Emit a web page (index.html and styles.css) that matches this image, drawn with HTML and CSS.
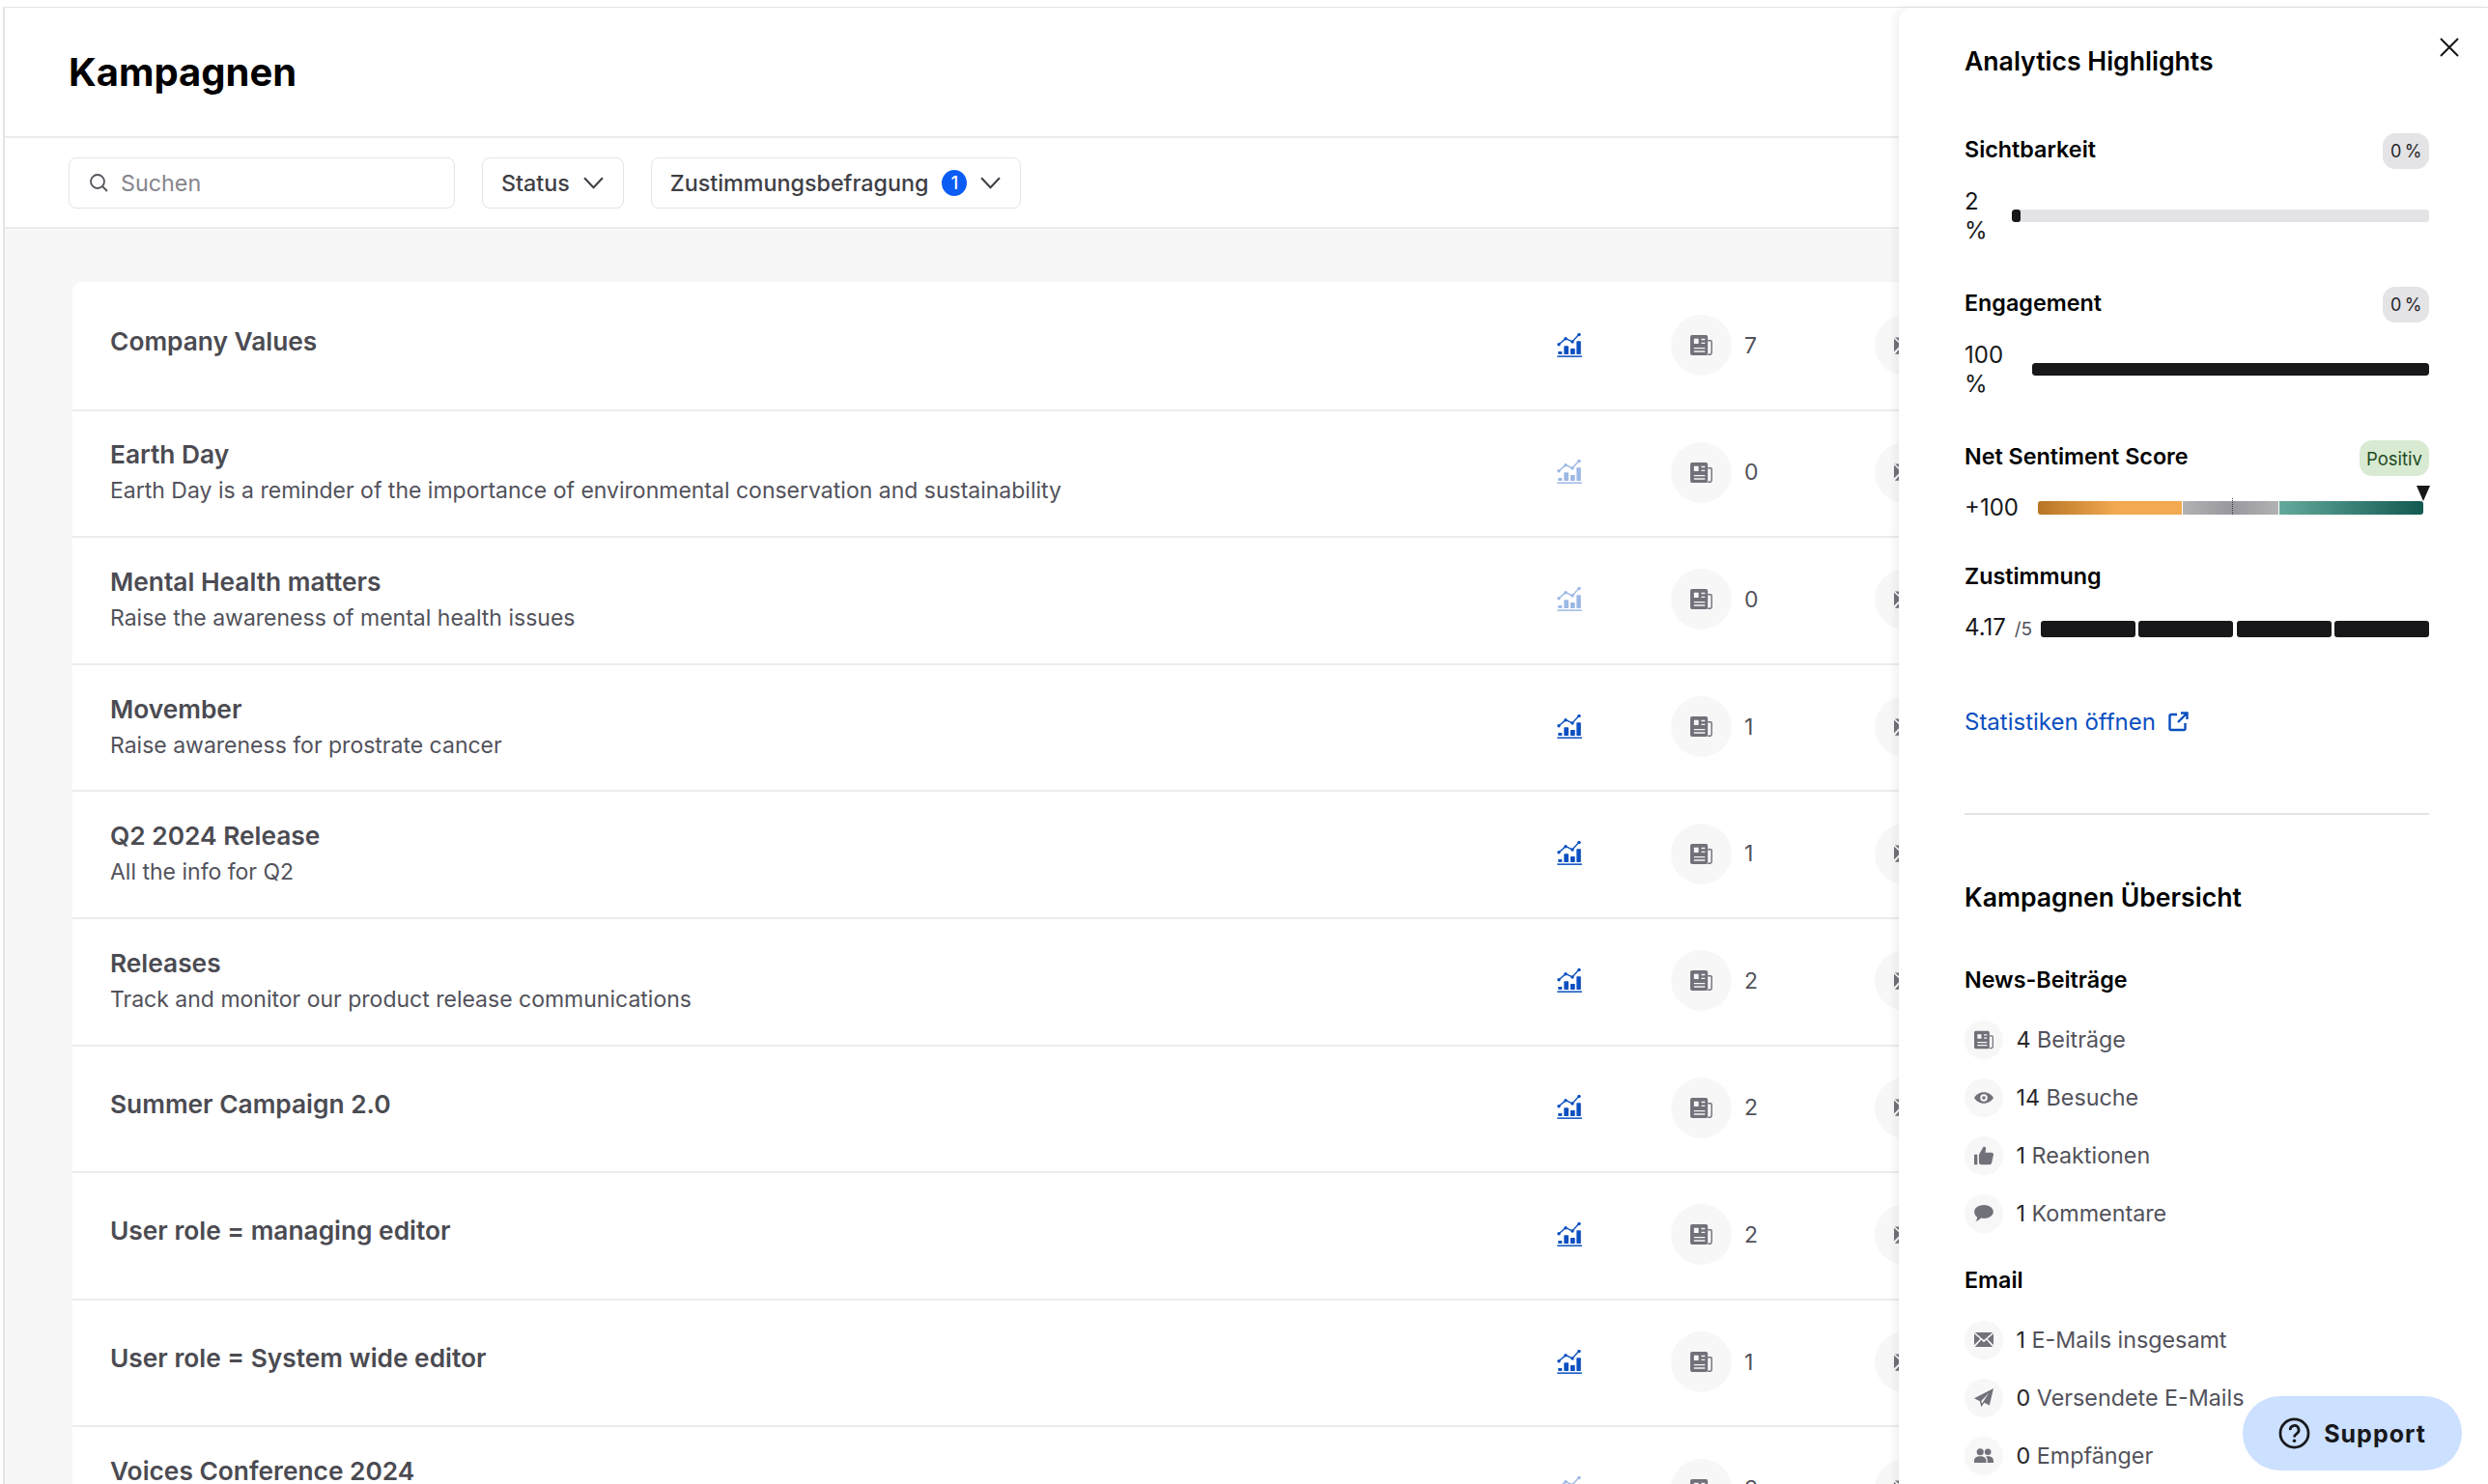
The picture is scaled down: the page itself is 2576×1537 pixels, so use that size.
FILE: index.html
```html
<!DOCTYPE html>
<html lang="de">

<head>
    <meta charset="UTF-8">
    <meta name="viewport" content="width=device-width, initial-scale=1.0">
    <title>Kampagnen</title>
    <link rel="stylesheet" href="styles.css">
</head>

<body>
    <svg class="sprites" aria-hidden="true">
        <symbol id="i-chart" viewBox="0 0 26 26">
            <path d="M2 11.7 9 5.7 16 9 23 1" fill="none" stroke="currentColor" stroke-width="1.4"/>
            <circle cx="2" cy="11.7" r="1.7" fill="currentColor"/>
            <circle cx="9" cy="5.7" r="1.7" fill="currentColor"/>
            <circle cx="16" cy="9" r="1.7" fill="currentColor"/>
            <circle cx="23" cy="1.6" r="1.7" fill="currentColor"/>
            <rect x="1.3" y="19" width="4" height="2.9" fill="currentColor"/>
            <rect x="7.3" y="13.3" width="4.7" height="8.6" rx=".6" fill="currentColor"/>
            <rect x="14" y="16" width="4.7" height="5.9" rx=".6" fill="currentColor"/>
            <rect x="20.3" y="8.3" width="4.5" height="13.6" rx=".6" fill="currentColor"/>
            <rect x=".3" y="23.4" width="25.6" height="1.5" fill="currentColor"/>
        </symbol>
        <symbol id="i-news" viewBox="0 0 24 22">
            <path fill-rule="evenodd" fill="currentColor" d="M2 0h15a2 2 0 0 1 2 2v18a2 2 0 0 1-2 2H2a2 2 0 0 1-2-2V2a2 2 0 0 1 2-2zM4 4v5.500h5V4zM12 4v1.500h4V4zM12 8v1.500h4V8zM4 13.500V15h12v-1.500zM4 17v1.500h12V17z"/>
            <path d="M19 6h3a1.200 1.200 0 0 1 1.200 1.200V19a2.300 2.300 0 0 1-2.300 2.300H19" fill="none" stroke="currentColor" stroke-width="1.500"/>
        </symbol>
        <symbol id="i-mail" viewBox="0 0 24 18">
            <path fill="currentColor" d="M1 0h22L12 9.500zM0 1.500l7.500 6.700L0 15.500zM24 1.500l-7.500 6.700 7.500 7.300zM8.700 9.300 12 12.200l3.300-2.900L23 18H1z"/>
        </symbol>
        <symbol id="i-eye" viewBox="0 0 24 14">
            <path fill="currentColor" fill-rule="evenodd" d="M12 0c5.500 0 9.800 3.200 12 7-2.200 3.800-6.500 7-12 7S2.200 10.800 0 7c2.200-3.800 6.500-7 12-7zm0 2.500a4.500 4.500 0 1 0 0 9 4.500 4.500 0 0 0 0-9zm0 2.300a2.200 2.200 0 1 1 0 4.400 2.200 2.200 0 0 1 0-4.400z"/>
        </symbol>
        <symbol id="i-thumb" viewBox="0 0 24 24">
            <path fill="currentColor" d="M0 10.500h4V23H0zM6 10.500 11.500.8c2.100-.4 3.300 1 3 3L13.700 8H21.500a2.500 2.500 0 0 1 2.400 3l-2.100 9.700A3 3 0 0 1 18.900 23H9a3 3 0 0 1-3-3z"/>
        </symbol>
        <symbol id="i-comment" viewBox="0 0 24 22">
            <path fill="currentColor" d="M12 0c6.600 0 12 3.700 12 8.500S18.600 17 12 17c-1.300 0-2.500-.1-3.700-.4C6.500 18.600 4 20.500 1.500 21c1.200-1.500 2-3.300 2.100-5.500C1.400 14 0 11.400 0 8.500 0 3.700 5.400 0 12 0z"/>
        </symbol>
        <symbol id="i-send" viewBox="0 0 24 24">
            <path fill="currentColor" d="M24 0 19 21l-6.500-3.300-3.700 5.300-1.800-7L0 12.300zM8.800 15.600l.9 3.400 1.300-2.200 7.500-11.500z"/>
        </symbol>
        <symbol id="i-people" viewBox="0 0 24 18">
            <circle cx="7.500" cy="4.500" r="4.300" fill="currentColor"/>
            <circle cx="17" cy="4.500" r="4" fill="currentColor"/>
            <path fill="currentColor" d="M0 18v-2.500C0 12 3 10 7.500 10S15 12 15 15.500V18zM16.500 18v-3c0-1.800-.7-3.500-2-4.600 .8-.3 1.700-.4 2.700-.4 4 0 6.800 2 6.800 5.500V18z"/>
        </symbol>
    </svg>

    <div class="app">
        <header class="page-header">
            <h1>Kampagnen</h1>
        </header>

        <div class="toolbar">
            <div class="search">
                <svg class="search-icon" viewBox="0 0 20 20"><circle cx="9" cy="9" r="7" fill="none" stroke="currentColor" stroke-width="1.800"/><path d="m14 14 5 5" stroke="currentColor" stroke-width="1.800"/></svg>
                <span>Suchen</span>
            </div>
            <div class="filter">
                <span>Status</span>
                <svg class="chevron" viewBox="0 0 20 12"><path d="m1 1 9 9.500L19 1" fill="none" stroke="currentColor" stroke-width="2"/></svg>
            </div>
            <div class="filter">
                <span>Zustimmungsbefragung</span>
                <span class="count">1</span>
                <svg class="chevron" viewBox="0 0 20 12"><path d="m1 1 9 9.500L19 1" fill="none" stroke="currentColor" stroke-width="2"/></svg>
            </div>
        </div>

        <main class="content">
            <div class="campaigns">
                <div class="campaign">
                    <div class="campaign-text"><div class="campaign-title">Company Values</div></div>
                    <svg class="chart"><use href="#i-chart"/></svg>
                    <div class="stat"><span class="stat-icon"><svg class="news"><use href="#i-news"/></svg></span>7</div>
                    <div class="stat"><span class="stat-icon"><svg class="mail"><use href="#i-mail"/></svg></span></div>
                </div>
                <div class="campaign">
                    <div class="campaign-text">
                        <div class="campaign-title">Earth Day</div>
                        <div class="campaign-sub">Earth Day is a reminder of the importance of environmental conservation and sustainability</div>
                    </div>
                    <svg class="chart faded"><use href="#i-chart"/></svg>
                    <div class="stat"><span class="stat-icon"><svg class="news"><use href="#i-news"/></svg></span>0</div>
                    <div class="stat"><span class="stat-icon"><svg class="mail"><use href="#i-mail"/></svg></span></div>
                </div>
                <div class="campaign">
                    <div class="campaign-text">
                        <div class="campaign-title">Mental Health matters</div>
                        <div class="campaign-sub">Raise the awareness of mental health issues</div>
                    </div>
                    <svg class="chart faded"><use href="#i-chart"/></svg>
                    <div class="stat"><span class="stat-icon"><svg class="news"><use href="#i-news"/></svg></span>0</div>
                    <div class="stat"><span class="stat-icon"><svg class="mail"><use href="#i-mail"/></svg></span></div>
                </div>
                <div class="campaign">
                    <div class="campaign-text">
                        <div class="campaign-title">Movember</div>
                        <div class="campaign-sub">Raise awareness for prostrate cancer</div>
                    </div>
                    <svg class="chart"><use href="#i-chart"/></svg>
                    <div class="stat"><span class="stat-icon"><svg class="news"><use href="#i-news"/></svg></span>1</div>
                    <div class="stat"><span class="stat-icon"><svg class="mail"><use href="#i-mail"/></svg></span></div>
                </div>
                <div class="campaign">
                    <div class="campaign-text">
                        <div class="campaign-title">Q2 2024 Release</div>
                        <div class="campaign-sub">All the info for Q2</div>
                    </div>
                    <svg class="chart"><use href="#i-chart"/></svg>
                    <div class="stat"><span class="stat-icon"><svg class="news"><use href="#i-news"/></svg></span>1</div>
                    <div class="stat"><span class="stat-icon"><svg class="mail"><use href="#i-mail"/></svg></span></div>
                </div>
                <div class="campaign">
                    <div class="campaign-text">
                        <div class="campaign-title">Releases</div>
                        <div class="campaign-sub">Track and monitor our product release communications</div>
                    </div>
                    <svg class="chart"><use href="#i-chart"/></svg>
                    <div class="stat"><span class="stat-icon"><svg class="news"><use href="#i-news"/></svg></span>2</div>
                    <div class="stat"><span class="stat-icon"><svg class="mail"><use href="#i-mail"/></svg></span></div>
                </div>
                <div class="campaign">
                    <div class="campaign-text"><div class="campaign-title">Summer Campaign 2.0</div></div>
                    <svg class="chart"><use href="#i-chart"/></svg>
                    <div class="stat"><span class="stat-icon"><svg class="news"><use href="#i-news"/></svg></span>2</div>
                    <div class="stat"><span class="stat-icon"><svg class="mail"><use href="#i-mail"/></svg></span></div>
                </div>
                <div class="campaign">
                    <div class="campaign-text"><div class="campaign-title">User role = managing editor</div></div>
                    <svg class="chart"><use href="#i-chart"/></svg>
                    <div class="stat"><span class="stat-icon"><svg class="news"><use href="#i-news"/></svg></span>2</div>
                    <div class="stat"><span class="stat-icon"><svg class="mail"><use href="#i-mail"/></svg></span></div>
                </div>
                <div class="campaign">
                    <div class="campaign-text"><div class="campaign-title">User role = System wide editor</div></div>
                    <svg class="chart"><use href="#i-chart"/></svg>
                    <div class="stat"><span class="stat-icon"><svg class="news"><use href="#i-news"/></svg></span>1</div>
                    <div class="stat"><span class="stat-icon"><svg class="mail"><use href="#i-mail"/></svg></span></div>
                </div>
                <div class="campaign">
                    <div class="campaign-text">
                        <div class="campaign-title">Voices Conference 2024</div>
                        <div class="campaign-sub">&nbsp;</div>
                    </div>
                    <svg class="chart faded"><use href="#i-chart"/></svg>
                    <div class="stat"><span class="stat-icon"><svg class="news"><use href="#i-news"/></svg></span>3</div>
                    <div class="stat"><span class="stat-icon"><svg class="mail"><use href="#i-mail"/></svg></span></div>
                </div>
            </div>
        </main>
    </div>

    <aside class="drawer">
        <svg class="close" viewBox="0 0 20 20"><path d="m1 1 18 18M19 1 1 19" fill="none" stroke="currentColor" stroke-width="2"/></svg>
        <h2 class="drawer-title">Analytics Highlights</h2>

        <section class="metric metric-first">
            <div class="metric-head"><h3>Sichtbarkeit</h3><span class="pill">0 %</span></div>
            <div class="metric-row metric-row-tight">
                <div class="value">2 %</div>
                <div class="bar"><div class="bar-fill" style="width: 2%"></div></div>
            </div>
        </section>

        <section class="metric">
            <div class="metric-head"><h3>Engagement</h3><span class="pill">0 %</span></div>
            <div class="metric-row">
                <div class="value">100 %</div>
                <div class="bar"><div class="bar-fill" style="width: 100%"></div></div>
            </div>
        </section>

        <section class="metric">
            <div class="metric-head"><h3>Net Sentiment Score</h3><span class="pill pill-green">Positiv</span></div>
            <div class="sentiment-row">
                <div class="sentiment-value">+100</div>
                <div class="sentiment">
                    <div class="seg seg-neg"></div>
                    <div class="seg seg-neutral"></div>
                    <div class="seg seg-pos"></div>
                    <div class="sentiment-zero"></div>
                    <div class="sentiment-pointer"></div>
                </div>
            </div>
        </section>

        <section class="metric metric-approval">
            <div class="metric-head"><h3>Zustimmung</h3></div>
            <div class="approval-row">
                <div class="approval-value">4.17 <small>/5</small></div>
                <div class="approval">
                    <div class="approval-seg"></div>
                    <div class="approval-seg"></div>
                    <div class="approval-seg"></div>
                    <div class="approval-seg"></div>
                </div>
            </div>
        </section>

        <a class="stats-link">Statistiken öffnen
            <svg viewBox="0 0 21 21"><path d="M9 3H3a1.500 1.500 0 0 0-1.500 1.500v13A1.500 1.500 0 0 0 3 19h13a1.500 1.500 0 0 0 1.500-1.500V12M13 1.500h6.500V8M19 2l-9 9" fill="none" stroke="currentColor" stroke-width="2.400"/></svg>
        </a>

        <hr class="drawer-rule">

        <h2 class="overview-title">Kampagnen Übersicht</h2>

        <h3 class="group-title">News-Beiträge</h3>
        <ul class="overview">
            <li><span class="ov-icon"><svg class="ov-news"><use href="#i-news"/></svg></span><b>4</b> Beiträge</li>
            <li><span class="ov-icon"><svg class="ov-eye"><use href="#i-eye"/></svg></span><b>14</b> Besuche</li>
            <li><span class="ov-icon"><svg class="ov-thumb"><use href="#i-thumb"/></svg></span><b>1</b> Reaktionen</li>
            <li><span class="ov-icon"><svg class="ov-comment"><use href="#i-comment"/></svg></span><b>1</b> Kommentare</li>
        </ul>

        <h3 class="group-title group-email">Email</h3>
        <ul class="overview">
            <li><span class="ov-icon"><svg class="ov-mail"><use href="#i-mail"/></svg></span><b>1</b> E-Mails insgesamt</li>
            <li><span class="ov-icon"><svg class="ov-send"><use href="#i-send"/></svg></span><b>0</b> Versendete E-Mails</li>
            <li><span class="ov-icon"><svg class="ov-people"><use href="#i-people"/></svg></span><b>0</b> Empfänger</li>
        </ul>
    </aside>

    <button class="support">
        <svg viewBox="0 0 34 34"><circle cx="17" cy="17" r="15" fill="none" stroke="currentColor" stroke-width="2.800"/><path d="M12.500 13.500a4.600 4.600 0 1 1 7 3.800c-1.700 1.100-2.500 1.900-2.500 3.700" fill="none" stroke="currentColor" stroke-width="2.800"/><circle cx="17" cy="25" r="1.800" fill="currentColor"/></svg>
        Support
    </button>
</body>
</html>
```

FILE: styles.css
```css
html, body {
    height: 100%;
    margin: 0;
    overflow: hidden;
    background-color: #fff;
    font-family: Inter, "Noto Sans", sans-serif;
    font-size: 23px;
    color: #18181b;
}

.sprites {
    display: none;
}

.app {
    display: flex;
    flex-direction: column;
    height: 1530px;
    margin: 7px 0 0 3px;
    border-top: 1px solid #e4e4e7;
    border-left: 2px solid #e4e4e7;
    box-sizing: border-box;
}

.page-header {
    display: flex;
    align-items: center;
    flex: none;
    height: 135px;
    padding-left: 66px;
    border-bottom: 2px solid #ececee;
    box-sizing: border-box;
}

.page-header h1 {
    margin: 0;
    font-size: 40px;
    font-weight: 700;
    color: #000;
}

.toolbar {
    display: flex;
    align-items: center;
    gap: 28px;
    flex: none;
    height: 94px;
    padding-left: 66px;
    border-bottom: 2px solid #ececee;
    box-sizing: border-box;
}

.search, .filter {
    display: flex;
    align-items: center;
    height: 53px;
    border: 1.600px solid #e4e4e7;
    border-radius: 8px;
    box-sizing: border-box;
    font-size: 23.300px;
    font-weight: 500;
    color: #3f3f46;
}

.search {
    gap: 13px;
    width: 400px;
    padding-left: 20px;
    font-weight: 400;
    color: #85858d;
}

.search-icon {
    width: 20px;
    height: 20px;
    color: #52525b;
}

.filter {
    gap: 14px;
    padding: 0 20px 0 19px;
}

.chevron {
    width: 21px;
    height: 13px;
    color: #3f3f46;
}

.count {
    display: flex;
    align-items: center;
    justify-content: center;
    width: 26px;
    height: 27px;
    border-radius: 50%;
    background-color: #0b5cf5;
    color: #fff;
    font-size: 18px;
}

.content {
    flex: 1;
    min-height: 0;
    padding: 55px 0 0 70px;
    background-color: #f7f7f8;
    overflow: hidden;
}

.campaigns {
    background-color: #fff;
    border-radius: 10px 0 0 0;
}

.campaign {
    display: grid;
    grid-template-columns: 1498px 118px 211px 1fr;
    align-items: center;
    height: 131.600px;
    padding: 0 0 2px 39px;
    border-top: 2px solid #ececee;
    box-sizing: border-box;
}

.campaign:first-child {
    border-top-color: transparent;
}

.campaign-title {
    font-size: 26.300px;
    font-weight: 600;
    line-height: 36px;
    color: #4b4b52;
}

/* rows without a description sit a little above centre */
.campaign-title:only-child {
    margin-bottom: 7px;
}

.campaign-sub {
    margin-top: 3px;
    line-height: 33px;
    color: #52525b;
}

.chart {
    width: 26px;
    height: 26px;
    color: #0b4fc0;
}

.chart.faded {
    opacity: 0.4;
}

.stat {
    display: flex;
    align-items: center;
    gap: 13px;
    color: #52525b;
}

.stat-icon {
    display: flex;
    align-items: center;
    justify-content: center;
    flex: none;
    width: 63px;
    height: 63px;
    border-radius: 50%;
    background-color: #f7f7f8;
    color: #71717a;
}

.news {
    width: 23px;
    height: 21px;
}

.mail {
    width: 23px;
    height: 18px;
}

/* overlay panel on the right */
.drawer {
    position: absolute;
    top: 8px;
    left: 1966px;
    right: 0;
    bottom: 0;
    padding: 39px 61px 0 68px;
    background-color: #fff;
    border-radius: 14px 0 0 0;
    box-shadow: -4px 0 8px rgba(0, 0, 0, 0.06);
    overflow: hidden;
}

.close {
    position: absolute;
    top: 31px;
    right: 30px;
    width: 20px;
    height: 20px;
}

.drawer-title, .overview-title {
    margin: 0;
    font-size: 26.600px;
    font-weight: 600;
    line-height: 33px;
    color: #000;
}

.metric {
    margin-top: 44px;
}

.metric-first {
    margin-top: 58px;
}

.metric-head {
    display: flex;
    align-items: center;
    justify-content: space-between;
    height: 37px;
}

.metric-head h3 {
    margin: 0 0 4px;
    font-size: 23.300px;
    font-weight: 600;
    color: #000;
}

.pill {
    display: flex;
    align-items: center;
    padding: 0 7.500px;
    height: 37px;
    border-radius: 13px;
    background-color: #e4e4e7;
    font-size: 18px;
    word-spacing: -1.500px;
    color: #27272a;
}

.pill-green {
    padding: 0 7px;
    background-color: #d8ead2;
    font-size: 18.500px;
    color: #1f4a1f;
}

.metric-row {
    display: flex;
    align-items: center;
    gap: 30px;
    margin-top: 19px;
}

.metric-row-tight {
    gap: 25px;
}

.value {
    width: min-content;
    font-size: 24px;
    line-height: 29.500px;
}

.bar {
    flex: 1;
    height: 13px;
    border-radius: 3px;
    background-color: #e4e4e7;
    overflow: hidden;
}

.bar-fill {
    min-width: 9px;
    height: 100%;
    border-radius: 3px;
    background-color: #18181b;
}

.sentiment-row {
    display: flex;
    align-items: center;
    gap: 20px;
    margin: 15px 6px 0 0;
}

.sentiment-value {
    font-size: 24px;
    line-height: 36px;
}

.sentiment {
    position: relative;
    display: grid;
    grid-template-columns: 149fr 99fr 149fr;
    gap: 1.500px;
    flex: 1;
    height: 14px;
}

.seg-neg {
    border-radius: 3px 0 0 3px;
    background: linear-gradient(90deg, #b87525, #f2a950 55%);
}

.seg-neutral {
    background: linear-gradient(90deg, #b2b2b5, #98989e 50%, #b2b2b5);
}

.seg-pos {
    border-radius: 0 3px 3px 0;
    background: linear-gradient(90deg, #63aa9c, #125a50);
}

.sentiment-zero {
    position: absolute;
    top: -3px;
    bottom: 0;
    left: 50.500%;
    border-left: 1.500px dotted #3f3f46;
}

.sentiment-pointer {
    position: absolute;
    top: -16px;
    right: -7px;
    border-top: 16px solid #18181b;
    border-left: 7px solid transparent;
    border-right: 7px solid transparent;
}

.metric-approval {
    margin-top: 36px;
}

.approval-row {
    display: flex;
    align-items: center;
    gap: 9px;
    margin-top: 15px;
}

.approval-value {
    font-size: 24px;
    line-height: 36px;
    white-space: nowrap;
}

.approval-value small {
    margin-left: 2px;
    font-size: 19px;
    color: #52525b;
}

.approval {
    display: grid;
    grid-template-columns: repeat(4, 1fr);
    gap: 3.500px;
    flex: 1;
}

.approval-seg {
    height: 17px;
    border-radius: 3px;
    background-color: #18181b;
}

.stats-link {
    display: flex;
    align-items: center;
    gap: 13px;
    margin-top: 59.500px;
    font-size: 24px;
    line-height: 36px;
    color: #0b4fc0;
}

.stats-link svg {
    width: 21px;
    height: 21px;
}

.drawer-rule {
    margin: 76px 0 0;
    border: none;
    border-top: 2px solid #e4e4e7;
}

.overview-title {
    margin-top: 69px;
}

.group-title {
    margin: 53px 0 0;
    font-size: 23.300px;
    font-weight: 600;
    line-height: 32px;
    color: #000;
}

.group-email {
    margin-top: 33px;
}

.overview {
    margin: 26px 0 0;
    padding: 0;
    list-style: none;
}

.overview li {
    display: flex;
    align-items: center;
    height: 40px;
    margin-bottom: 20px;
    font-size: 23.300px;
    color: #52525b;
    white-space: pre;
}

.overview b {
    font-weight: 400;
    color: #27272a;
}

.ov-icon {
    display: flex;
    align-items: center;
    justify-content: center;
    flex: none;
    width: 40px;
    height: 40px;
    margin-right: 13.500px;
    border-radius: 50%;
    background-color: #f7f7f8;
    color: #71717a;
}

.ov-news, .ov-thumb, .ov-send {
    width: 20px;
    height: 20px;
}

.ov-eye {
    width: 20px;
    height: 12px;
}

.ov-comment {
    width: 20px;
    height: 18px;
}

.ov-mail, .ov-people {
    width: 20px;
    height: 15px;
}

.support {
    position: absolute;
    right: 27px;
    bottom: 14px;
    display: flex;
    align-items: center;
    justify-content: center;
    gap: 14px;
    width: 227px;
    height: 77px;
    border: none;
    border-radius: 39px;
    background-color: #cce0ff;
    font-family: Inter, sans-serif;
    font-size: 25px;
    font-weight: 700;
    letter-spacing: 1px;
    color: #18181b;
}

.support svg {
    width: 33px;
    height: 33px;
}
```
